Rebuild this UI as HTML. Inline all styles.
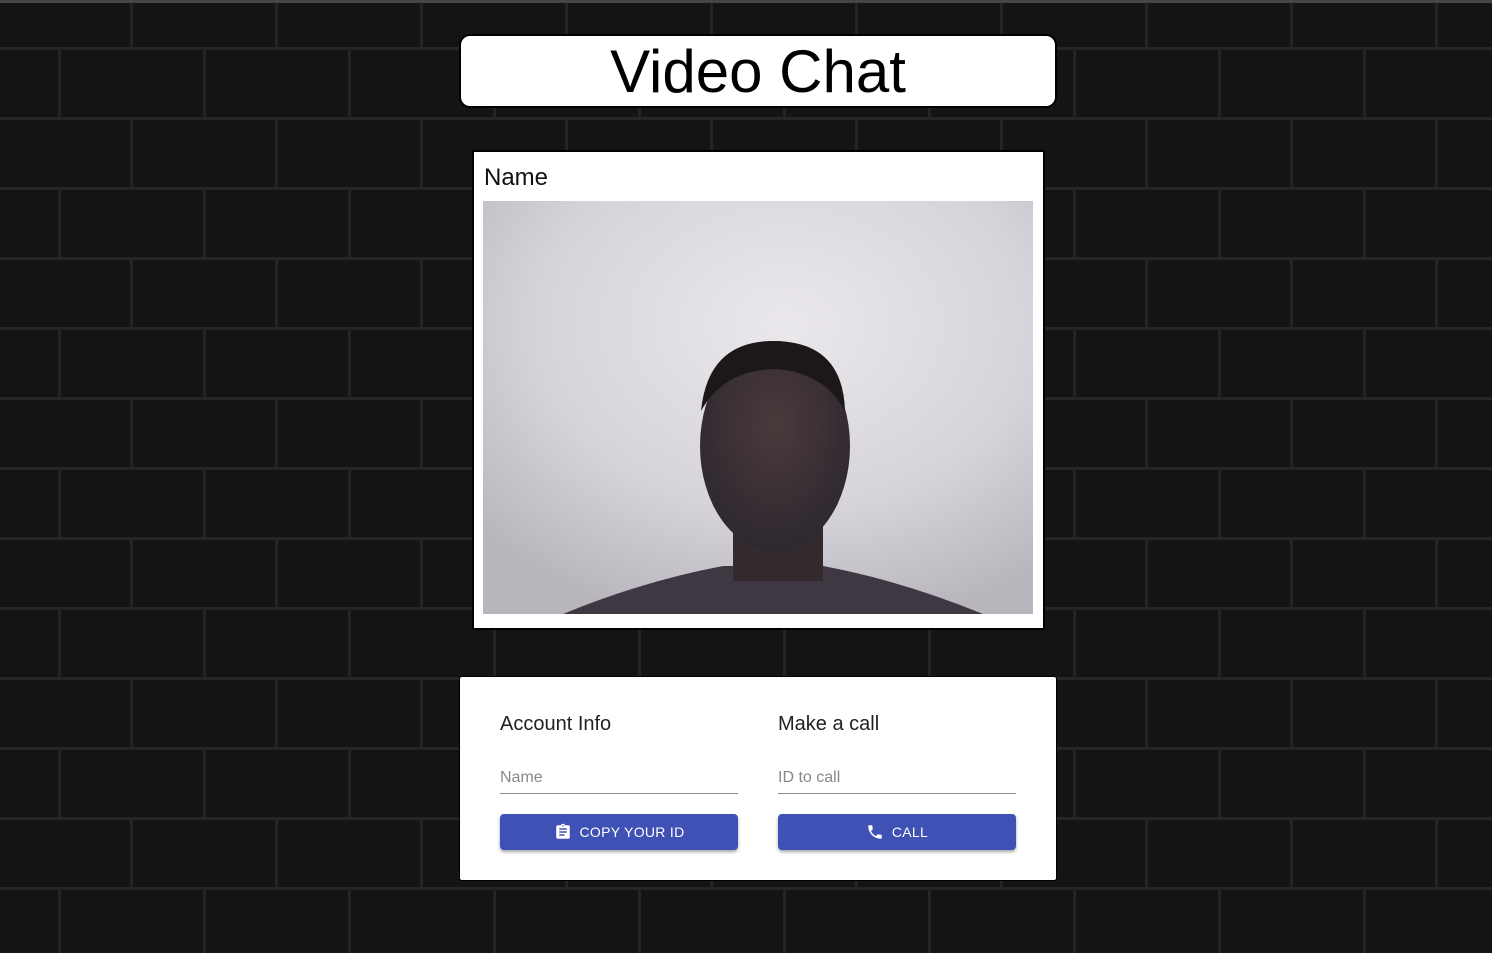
<!DOCTYPE html>
<html><head><meta charset="utf-8">
<style>
html,body{margin:0;padding:0;}
body{width:1492px;height:953px;overflow:hidden;position:relative;background:#141414;font-family:"Liberation Sans",Arial,sans-serif;}
.bg{position:absolute;left:0;top:0;}
.topbar{position:absolute;left:0;top:0;width:1492px;height:3px;background:#454545;}
.title{position:absolute;left:459px;top:34px;width:594px;height:70px;background:#fff;border:2px solid #000;border-radius:11px;text-align:center;font-size:60px;line-height:72px;color:#000;}
.vcard{position:absolute;left:472px;top:150px;width:569px;height:476px;background:#fff;border:2px solid #000;border-radius:2px;}
.vcard .nm{position:absolute;left:10px;top:12px;font-size:24px;color:#111;}
.video{position:absolute;left:9px;top:49px;width:550px;height:413px;}
.card{position:absolute;left:459px;top:676px;width:596px;height:203px;background:#fff;border:1px solid #000;border-radius:3px;}
.col{position:absolute;top:0;width:238px;}
.col h3{position:absolute;top:36px;left:0;margin:0;font-weight:normal;font-size:20px;color:#222;}
.col .inp{position:absolute;top:92px;left:0;width:238px;font-size:16px;color:#888;height:24px;border-bottom:1px solid #8a8a8a;}
.btn{position:absolute;top:137px;left:0;width:238px;height:36px;background:#3f51b5;border-radius:4px;box-shadow:0 2px 3px rgba(0,0,0,.35);color:#fff;font-size:14px;display:flex;align-items:center;justify-content:center;letter-spacing:.3px;}
.btn svg{margin-right:8px;}
</style></head><body>
<svg class="bg" width="1492" height="953">
<defs>
<pattern id="b" x="0" y="47" width="145" height="140" patternUnits="userSpaceOnUse">
<rect width="145" height="140" fill="#141414"/>
<rect x="0" y="0" width="145" height="3" fill="#262626"/>
<rect x="0" y="70" width="145" height="3" fill="#262626"/>
<rect x="58" y="0" width="3" height="70" fill="#242424"/>
<rect x="130" y="70" width="3" height="70" fill="#242424"/>
</pattern>
</defs>
<rect width="1492" height="953" fill="url(#b)"/>
</svg>
<div class="topbar"></div>
<div class="title">Video Chat</div>
<div class="vcard">
<div class="nm">Name</div>
<svg class="video" viewBox="0 0 550 413">
<defs>
<radialGradient id="w" cx="55%" cy="30%" r="75%">
<stop offset="0" stop-color="#ebe8ec"/><stop offset="0.6" stop-color="#d6d4da"/><stop offset="1" stop-color="#b8b6bc"/>
</radialGradient>
<radialGradient id="s" cx="50%" cy="40%" r="60%">
<stop offset="0" stop-color="#4a3a3c"/><stop offset="1" stop-color="#2e2830"/>
</radialGradient>
</defs>
<rect width="550" height="413" fill="url(#w)"/>
<path d="M80 413 Q160 380 240 365 L340 365 Q420 380 500 413 Z" fill="#3f3842"/>
<rect x="250" y="300" width="90" height="80" fill="#332a2e"/>
<ellipse cx="292" cy="245" rx="75" ry="105" fill="url(#s)"/>
<path d="M218 210 Q225 140 290 140 Q360 140 362 210 Q340 170 290 168 Q240 170 218 210Z" fill="#1c181a"/>
</svg>
</div>
<div class="card">
<div class="col" style="left:40px">
<h3>Account Info</h3>
<div class="inp">Name</div>
<div class="btn"><svg width="18" height="18" viewBox="0 0 24 24"><path fill="#fff" d="M19 3h-4.18C14.4 1.840 13.3 1 12 1s-2.4.84-2.820 2H5c-1.1 0-2 .9-2 2v14c0 1.1.9 2 2 2h14c1.1 0 2-.9 2-2V5c0-1.1-.9-2-2-2zm-7 0c.55 0 1 .45 1 1s-.45 1-1 1-1-.45-1-1 .45-1 1-1zm2 14H7v-2h7v2zm3-4H7v-2h10v2zm0-4H7V7h10v2z"/></svg>COPY YOUR ID</div>
</div>
<div class="col" style="left:318px">
<h3>Make a call</h3>
<div class="inp">ID to call</div>
<div class="btn"><svg width="18" height="18" viewBox="0 0 24 24"><path fill="#fff" d="M6.62 10.79c1.44 2.83 3.76 5.14 6.59 6.59l2.2-2.2c.27-.27.67-.36 1.020-.24 1.12.37 2.33.57 3.57.57.55 0 1 .45 1 1V20c0 .55-.45 1-1 1-9.39 0-17-7.61-17-17 0-.55.45-1 1-1h3.5c.55 0 1 .45 1 1 0 1.25.2 2.45.57 3.57.11.35.03.74-.25 1.020l-2.2 2.2z"/></svg>CALL</div>
</div>
</div>
</body></html>
